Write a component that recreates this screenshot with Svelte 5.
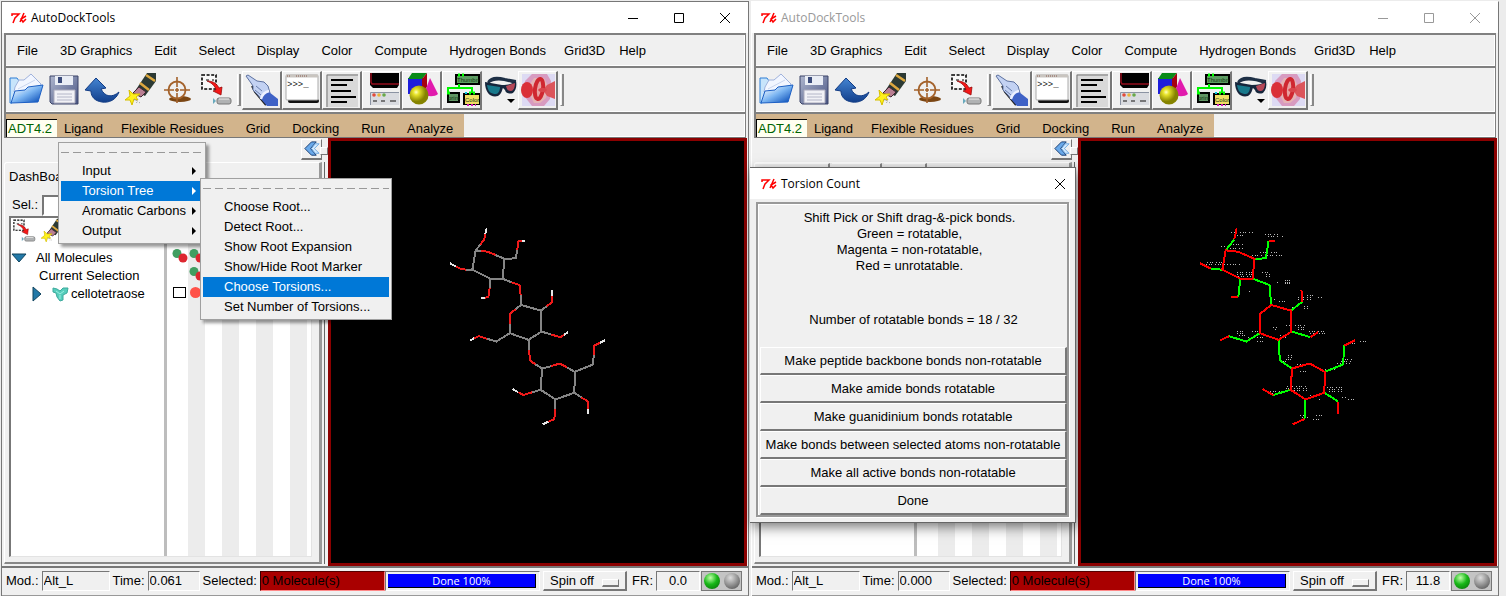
<script lang="ts">
	type Segment = [string, string];

	const menus = ['File', '3D Graphics', 'Edit', 'Select', 'Display', 'Color', 'Compute', 'Hydrogen Bonds', 'Grid3D', 'Help'];
	const adtMenus = ['Ligand', 'Flexible Residues', 'Grid', 'Docking', 'Run', 'Analyze'];
	const tools = ['open', 'save', 'undo', 'erase', 'target', 'select'];
	const panels = ['pointer', 'console', 'text', 'viewer', 'shapes', 'network', 'glasses', 'volume'];

	const ligandMenu = ['Input', 'Torsion Tree', 'Aromatic Carbons', 'Output'];
	const torsionMenu = [
		'Choose Root...',
		'Detect Root...',
		'Show Root Expansion',
		'Show/Hide Root Marker',
		'Choose Torsions...',
		'Set Number of Torsions...'
	];

	const torsionActions = [
		'Make peptide backbone bonds non-rotatable',
		'Make amide bonds rotatable',
		'Make guanidinium bonds rotatable',
		'Make bonds between selected atoms non-rotatable',
		'Make all active bonds non-rotatable',
		'Done'
	];

	const windows = [
		{ id: 'main', active: true, time: '0.061', rate: '0.0' },
		{ id: 'torsions', active: false, time: '0.000', rate: '11.8' }
	];

	// bonds coloured by atom type
	const byAtom: Segment[] = [
		['carbon', 'M155 121L138 119L128 177L182 204H219L225 144L198 133M138 119L152 102M225 144L259 143L263 117M128 177H110M182 204L180 232M219 204L246 215'],
		['carbon', 'M273 252L275 283L334 300L336 363L297 388L241 368V340M275 283L258 296M334 300L352 287M336 363L365 372M241 368L200 393L173 385M297 388L299 418'],
		['carbon', 'M317 461L338 474L333 538L378 567L435 547L436 484L413 471M338 474L365 467M436 484L491 462L493 434M435 547L456 561M378 567L376 597M333 538L307 546'],
		['oxygen', 'M155 121L175 123L198 133M152 102L164 86L167 70M263 117L267 90H277M110 177L93 174L78 167M180 232L176 260L165 261M246 215L270 223L273 252'],
		['oxygen', 'M258 296L241 310V340M352 287L368 274L369 256M365 372L393 380L404 373M173 385L148 377L134 383M299 418L301 450L317 461'],
		['oxygen', 'M365 467L391 459L413 471M493 434L495 405L511 397M456 561L477 574V595M376 597L375 626L357 634M307 546L281 554L266 545'],
		['hydrogen', 'M167 70L171 53M277 90H287M78 167L61 158M165 261H153M369 256L366 238M404 373L416 365M134 383L121 390M511 397L527 389M477 595V611M357 634L340 642M266 545L249 536']
	];

	// bonds coloured by torsion state
	const byTorsion: Segment[] = [
		['rotatable', 'M138 119L164 86M225 144L259 143L267 90M128 177L93 174M182 204L176 260M219 204L270 223L275 283M334 300L368 274M336 363L393 380M241 368L200 393L148 377'],
		['rotatable', 'M297 388L301 450L338 474M436 484L491 462L495 405M435 547L477 574M378 567L375 626M333 538L281 554'],
		['unrotatable', 'M138 119L175 123L225 144L219 204H182L128 177ZM275 283L334 300L336 363L297 388L241 368V310ZM338 474L391 459L436 484L435 547L378 567L333 538Z'],
		['unrotatable', 'M164 86L171 53M267 90H287M93 174L61 158M176 260H153M368 274L366 238M393 380L416 365M148 377L121 390M495 405L527 389M477 574V611M375 626L340 642M281 554L249 536']
	];

	// label dots: x start, x end, y
	const dots = [
		[153, 176, 64], [180, 220, 64], [171, 190, 73], [123, 135, 106], [159, 195, 100], [150, 192, 112],
		[255, 298, 70], [265, 300, 76], [307, 312, 76], [321, 324, 70], [240, 265, 124], [274, 302, 124],
		[218, 250, 135], [262, 306, 135], [81, 130, 154], [78, 145, 160], [150, 182, 160],
		[171, 216, 184], [171, 220, 190], [174, 220, 196], [246, 274, 184], [260, 270, 190], [260, 270, 196],
		[291, 300, 214], [315, 332, 208], [315, 332, 214], [315, 332, 220],
		[207, 210, 244], [282, 290, 268], [297, 318, 274], [384, 402, 256], [357, 396, 262], [357, 396, 268], [416, 428, 262],
		[339, 352, 292], [374, 390, 287], [374, 390, 293], [320, 384, 346], [357, 384, 352], [357, 384, 358], [279, 294, 352], [285, 294, 358],
		[171, 200, 364], [171, 200, 370], [177, 196, 376], [216, 236, 364], [204, 258, 380], [390, 444, 364], [392, 444, 370],
		[300, 324, 376], [300, 318, 382], [232, 254, 393], [326, 340, 436], [326, 340, 442], [318, 340, 448], [302, 324, 454],
		[354, 376, 462], [510, 532, 400], [543, 564, 394], [488, 522, 448], [484, 522, 454], [474, 512, 460], [362, 380, 484],
		[436, 474, 478], [324, 384, 528], [318, 386, 534], [318, 386, 540], [444, 488, 532], [450, 488, 538], [450, 488, 544],
		[270, 312, 544], [276, 312, 550], [392, 410, 556], [420, 426, 568], [488, 500, 562], [507, 528, 568],
		[362, 390, 616], [368, 390, 622], [411, 432, 616], [400, 424, 628]
	];
</script>

{#snippet icon(name: string)}
	<svg class="icon" viewBox="0 0 36 36" aria-hidden="true">
		{#if name === 'open'}
			<path d="M2 6h7l2 3v6L4 31H2z" fill="#c7e4fb" stroke="#2f7fd6" />
			<path d="M7 15L11 8h5l7-6 10 10-3 8H6z" fill="#f2f6ff" stroke="#9fb2dc" />
			<path d="M10 17l17-9" stroke="#c9d5ee" />
			<path d="M7 19l10-1 3-3 15-2-5 17-27 1z" fill="url(#folder)" stroke="#1c5fc4" />
		{:else if name === 'save'}
			<path d="M4 4h28v28H6l-2-2z" fill="url(#disk)" stroke="#3c4468" />
			<path d="M9 4h18v9H9z" fill="#e9edf5" />
			<path d="M12 5h4v6h-4z" fill="#3b4b7a" />
			<path d="M8 18h21v13H8z" fill="#f1f1f6" stroke="#aab" />
			<path d="M11 22h15M11 25h15M11 28h15" stroke="#b4b6c8" />
		{:else if name === 'undo'}
			<path d="M1 18L12 6l10 10-5 1c4 8 11 9 18 3-3 8-10 11-17 10C11 29 7 25 7 19z" fill="url(#arrow)" stroke="#123c85" />
		{:else if name === 'erase'}
			<path d="M25 1h9v8L23 24l-10-5z" fill="#2c3a34" />
			<path d="M24 3l9 6M18 11l9 7" stroke="#dda83f" stroke-width="2.5" />
			<path d="M17 15l7 5-5 5-8-4z" fill="#b97f92" stroke="#3f2530" />
			<path d="M7 18l4 4 7 0-4 3 2 3-4-1-2 6-2-5-5 0 5-4z" fill="#fff21c" stroke="#d6bf00" />
			<path d="M12 27l3 4M14 28l4 3" stroke="#999" stroke-dasharray="2 2" />
		{:else if name === 'target'}
			<ellipse cx="20" cy="27" rx="11" ry="3" fill="#7b4613" />
			<circle cx="17" cy="18" r="8.5" fill="#efefef" stroke="#a4622b" stroke-width="1.8" />
			<path d="M17 5v10M17 21v10M4 18h10M20 18h10M15 18h4M17 16v4" stroke="#a4622b" stroke-width="1.6" />
		{:else if name === 'select'}
			<path d="M4 3h14v14H4z" fill="#f8f8f8" stroke="#000" stroke-width="1.6" stroke-dasharray="3 1.6" />
			<path d="M8 8h3M14 8h2" stroke="#000" />
			<path d="M9 9c7 0 10 3 12 7l3-1-1 8-8-4 3-1c-1-4-4-7-9-9z" fill="#f41818" stroke="#8d0000" stroke-width=".7" />
			<rect x="19" y="26" width="14" height="6" rx="2" fill="#b0b2b3" stroke="#777" />
			<path d="M15 26l3 3-3 3z" fill="#68aabd" />
			<path d="M21 27h10" stroke="#eee" />
		{:else if name === 'pointer'}
			<path d="M8 14l3 6 6 7 5 6" stroke="#222" stroke-width="2" />
			<path d="M2 4l2-1 9 6 7 1 4 4 2 7-8 7-5-6-4-4 0-4-2-3z" fill="#c3d2f3" stroke="#5d719f" />
			<path d="M12 14l6 5M11 18l6 5" stroke="#6a7fae" />
			<path d="M17 27c1-4 4-7 8-7l9 7v7H23z" fill="#3f62c6" />
			<path d="M17 27c1-4 4-7 8-8" stroke="#edf1ff" stroke-width="2.5" />
		{:else if name === 'console'}
			<rect x="4" y="27" width="31" height="4" rx="2" fill="#111" />
			<rect x="2" y="3" width="32" height="25" rx="1" fill="#fff" stroke="#aaa" />
			<path d="M2 4h32" stroke="#c9c5c0" stroke-width="3" />
			<path d="M3 4h3M12 4h12" stroke="#885a4f" stroke-dasharray="1 1" />
			<text x="3" y="15" class="prompt">&gt;&gt;&gt;_</text>
		{:else if name === 'text'}
			<path d="M2 2h32v33H2z" fill="#d9d9d9" />
			<path d="M3 35V3h31" stroke="#777" />
			<path d="M7 8h22M7 13h16M7 19h20M7 25h25M7 30h16" stroke="#000" stroke-width="2" />
		{:else if name === 'viewer'}
			<path d="M6 1h29v12l-2 3H9l-3-3z" fill="#000" />
			<path d="M7 1v9l1 2h27" stroke="#930d1c" stroke-width="1.5" />
			<rect x="6" y="21" width="29" height="12" fill="#d9dbe0" />
			<path d="M6.500 33V20.500H35" stroke="#8b93a3" />
			<circle cx="10" cy="23" r="1.8" fill="#e34a3a" />
			<circle cx="15" cy="23" r="1.8" fill="#e8b43b" />
			<circle cx="20" cy="23" r="1.8" fill="#68a94a" />
			<path d="M9 29h4M17 29h4M26 29h6" stroke="#555" stroke-width="1.5" />
		{:else if name === 'shapes'}
			<path d="M4 6h15v16H4z" fill="#1d1ddc" />
			<path d="M4 7l4-6h15l-5 6z" fill="#098b18" />
			<path d="M18 7l5-6v14l-5 5z" fill="#a60012" />
			<path d="M26 6l8 16c-3 3-11 3-14 0z" fill="#e11aad" />
			<circle cx="15" cy="23" r="9.500" fill="url(#ball)" />
		{:else if name === 'network'}
			<path d="M12 3h23v9H12z" fill="#5d9b62" stroke="#000" stroke-width="2" />
			<path d="M15 12v4M4 22v-6h24v5" stroke="#00f700" stroke-width="2" />
			<path d="M4 21h11v9H4zM20 22h15v10H20z" fill="#609563" stroke="#000" stroke-width="2" />
			<path d="M21 23h14v9H21z" fill="#f1df64" />
			<path d="M14 3h2M18 3h2M3 21h3M25 21h2M29 21h2" stroke="#0f0" stroke-width="3" />
			<path d="M21 21h2" stroke="#0bc8df" stroke-width="2" />
			<path d="M23 33h9" stroke="#d318b8" stroke-width="2" stroke-dasharray="2 2" />
			<text x="13" y="10" class="node">Thumbn</text>
			<text x="4" y="28" class="node">print</text>
			<text x="21" y="30" class="node">Color</text>
		{:else if name === 'glasses'}
			<path d="M5 10c3-5 10-5 17-3l11 2M5 11c6-5 16-4 27 0" stroke="#1d2f45" stroke-width="2" />
			<path d="M2 10c6 1 11 2 17 3 6 0 10-1 14-4 1 5 0 9-3 12-3 1-7 1-8-3l-2-2c-1 1-1 6-5 8-4 1-8 0-10-3-2-3-3-6-3-11z" fill="#16263c" />
			<path d="M4 13l13 2c0 4-2 7-4 7-5 0-8-2-9-9z" fill="#17788b" />
			<path d="M23 14l9-3c0 5-2 8-4 8-3 0-4-1-5-5z" fill="#b54758" />
			<path d="M24 27h8l-4 4z" fill="#000" />
		{:else}
			<path d="M2 2h33v32H2z" fill="#dddaf3" />
			<path d="M12 2h15l4 7-1 18-6 7H12L5 25V9z" fill="#d89bc0" />
			<path d="M14 6h10l4 8-2 12-6 5h-6l-4-8V12z" fill="#e5b3b4" />
			<ellipse cx="7" cy="18" rx="6" ry="8" fill="#da3038" />
			<path d="M23 18l4-5 8-4v18l-8-3z" fill="#db545a" />
			<ellipse cx="19" cy="17" rx="4" ry="10" fill="#e9a0a0" stroke="#cf2730" stroke-width="4" transform="rotate(8 19 17)" />
			<path d="M18 18c2-3 7-3 9 0-2 3-7 3-9 0z" fill="#d9454c" />
		{/if}
	</svg>
{/snippet}

{#snippet logo()}
	<svg class="logo" viewBox="0 0 16 12" aria-hidden="true">
		<path d="M1 4V2h7L4 6l-2 5M13 1L9 10M15 4l-5 3 2 3 3-3" />
	</svg>
{/snippet}

{#snippet atoms()}
	<svg class="atoms" viewBox="0 0 17 14" aria-hidden="true">
		<circle cx="5" cy="4.500" r="4.500" fill="#419e61" />
		<circle cx="11" cy="9" r="4.500" fill="#dd2730" />
	</svg>
{/snippet}

<svg class="defs" aria-hidden="true">
	<defs>
		<linearGradient id="folder" x1="0" y1="0" x2="1" y2="1">
			<stop offset=".1" stop-color="#fff" /><stop offset=".5" stop-color="#7bb5f2" /><stop offset=".9" stop-color="#1457bd" />
		</linearGradient>
		<linearGradient id="disk" x1="0" y1="0" x2="1" y2="1">
			<stop offset="0" stop-color="#aeb6ce" /><stop offset="1" stop-color="#495583" />
		</linearGradient>
		<linearGradient id="arrow" x1="0" y1="0" x2="0" y2="1">
			<stop offset="0" stop-color="#4585d2" /><stop offset="1" stop-color="#123f8c" />
		</linearGradient>
		<radialGradient id="ball" cx=".35" cy=".35">
			<stop offset="0" stop-color="#ffffc0" /><stop offset=".3" stop-color="#e7e32b" /><stop offset="1" stop-color="#858300" />
		</radialGradient>
	</defs>
</svg>

<div class="desktop">
	{#each windows as win (win.id)}
		<section class="window" class:inactive={!win.active}>
			<header class="titlebar">
				{@render logo()}
				<h1>AutoDockTools</h1>
				<div class="controls">
					<button aria-label="Minimize"><svg viewBox="0 0 12 12"><path d="M1 6.500h10" /></svg></button>
					<button aria-label="Maximize"><svg viewBox="0 0 12 12"><path d="M1.500 1.500h9v9h-9z" /></svg></button>
					<button aria-label="Close"><svg viewBox="0 0 12 12"><path d="M1 1l10 10M11 1L1 11" /></svg></button>
				</div>
			</header>

			<nav class="menubar">
				{#each menus as menu}
					<button class:tight={menu === 'Grid3D' || menu === 'Help'}>{menu}</button>
				{/each}
			</nav>

			<div class="toolbar">
				{#each tools as tool}
					<button class="tool" aria-label={tool}>{@render icon(tool)}</button>
				{/each}
				<span class="separator"></span>
				{#each panels as panel}
					<button class="panel" class:flat={panel === 'glasses'} aria-label={panel}>{@render icon(panel)}</button>
				{/each}
				<span class="separator"></span>
			</div>

			<div class="adt">
				<div class="adt-menus">
					<button class="version">ADT4.2</button>
					{#each adtMenus as menu}
						<button class:tight={menu === 'Ligand'}>{menu}</button>
					{/each}
				</div>
				{#if win.active}
					<ul class="menu ligand-menu">
						{#each ligandMenu as item}
							<li class:chosen={item === 'Torsion Tree'}>
								<button>{item}<span class="more"></span></button>
								{#if item === 'Torsion Tree'}
									<ul class="menu submenu">
										{#each torsionMenu as entry}
											<li class:chosen={entry === 'Choose Torsions...'}><button>{entry}</button></li>
										{/each}
									</ul>
								{/if}
							</li>
						{/each}
					</ul>
				{/if}
			</div>

			<main>
				<aside>
					<button class="collapse" aria-label="Collapse panel">
						<svg viewBox="0 0 20 18"><path d="M10 2h5l-6 7 6 7h-5L3 9z" fill="#69a9ea" stroke="#173b70" /><path d="M14 4h4l-5 5 5 5h-4l-4-5z" fill="#d6edff" stroke="#6ba6e0" /></svg>
					</button>
					<span class="sash"></span>
					<div class="dashboard">
						{#if win.active}
							<h2>DashBoard</h2>
							<div class="selection">
								<label for="sel">Sel.:</label>
								<input id="sel" />
							</div>
						{:else}
							<div class="tab-tops"><span></span><span></span><span></span></div>
						{/if}
						<div class="tree">
							<div class="names">
								{#if win.active}
									<div class="tree-tools">{@render icon('select')}{@render icon('erase')}</div>
									<ul>
										<li>
											<svg class="twist" viewBox="0 0 16 10"><path d="M1 1h14L8 9z" /></svg>
											All Molecules
										</li>
										<li class="current">Current Selection</li>
										<li class="child">
											<svg class="twist side" viewBox="0 0 10 16"><path d="M1 1v14l8-7z" /></svg>
											<svg class="blob" viewBox="0 0 17 15"><path d="M1 1l4 1 3 2 3-3 5 0-1 5-4 2v5l-3 1-3-4-1-4-3-1z" fill="#56cdbb" stroke="#3daa9d" /><path d="M4 4l4 3 4-3M8 8v4" stroke="#9cf0e2" /></svg>
											cellotetraose
										</li>
									</ul>
								{/if}
							</div>
							<div class="columns">
								{#if win.active}
									<div class="marks">{@render atoms()}{@render atoms()}</div>
									<div class="marks second">{@render atoms()}</div>
									<div class="marks">
										<input type="checkbox" aria-label="Show lines for cellotetraose" />
										<span class="dot"></span>
									</div>
								{/if}
							</div>
						</div>
					</div>
				</aside>

				<div class="view">
					<svg viewBox="0 0 414 423" shape-rendering="crispEdges" aria-label="cellotetraose">
						<g transform="translate(99 70) scale(.33333)">
							{#if !win.active}
								{#each dots as [from, to, y]}
									<path class="dots" d="M{from} {y}H{to}" />
								{/each}
							{/if}
							{#each win.active ? byAtom : byTorsion as [kind, d]}
								<path class="bond {kind}" {d} />
							{/each}
						</g>
					</svg>
				</div>
			</main>

			<footer>
				<label for="mod-{win.id}">Mod.:</label>
				<input class="mod" id="mod-{win.id}" value="Alt_L" readonly />
				<label for="time-{win.id}">Time:</label>
				<input class="time" id="time-{win.id}" value={win.time} readonly />
				<label for="selected-{win.id}">Selected:</label>
				<input class="selected" id="selected-{win.id}" value="0 Molecule(s)" readonly />
				<div class="progress" role="progressbar" aria-valuenow="100"><span>Done 100%</span></div>
				<div class="spin">
					<select aria-label="Spin"><option>Spin off</option></select>
				</div>
				<label for="rate-{win.id}">FR:</label>
				<input class="rate" id="rate-{win.id}" value={win.rate} readonly />
				<div class="leds"><span class="led on"></span><span class="led"></span></div>
			</footer>

			{#if !win.active}
				<div class="dialog" role="dialog" aria-labelledby="torsion-title">
					<header class="titlebar">
						{@render logo()}
						<h2 id="torsion-title">Torsion Count</h2>
						<div class="controls">
							<button aria-label="Close dialog"><svg viewBox="0 0 12 12"><path d="M1 1l10 10M11 1L1 11" /></svg></button>
						</div>
					</header>
					<div class="dialog-frame">
						<p class="hint">
							Shift Pick or Shift drag-&amp;-pick bonds.<br />
							Green = rotatable,<br />
							Magenta = non-rotatable,<br />
							Red = unrotatable.
						</p>
						<p class="count">Number of rotatable bonds = 18 / 32</p>
						{#each torsionActions as action}
							<button>{action}</button>
						{/each}
					</div>
				</div>
			{/if}
		</section>
	{/each}
</div>

<style>
	:global(body) {
		background: #ececec;
	}

	* {
		box-sizing: border-box;
	}

	button,
	input,
	select {
		font: inherit;
		color: inherit;
		margin: 0;
		padding: 0;
		border: 0;
		border-radius: 0;
		background: none;
	}

	h1,
	h2,
	p,
	ul {
		margin: 0;
		padding: 0;
		list-style: none;
	}

	svg {
		display: block;
		fill: none;
	}

	.defs {
		position: absolute;
		width: 0;
		height: 0;
	}

	.desktop {
		display: flex;
		min-height: 100vh;
		padding-right: 6px;
		font: 13px/16px 'Liberation Sans', Arial, sans-serif;
		color: #000;
	}

	.window {
		position: relative;
		display: flex;
		flex: 1;
		flex-direction: column;
		min-width: 0;
		margin: 1px 1px 0;
		border: 1px solid #777;
		border-bottom: 0;
		background: #f0f0f0;
	}

	.window.inactive {
		border-color: #fff #777 #fff #fff;
	}

	.titlebar {
		display: flex;
		align-items: center;
		height: 31px;
		padding-left: 9px;
		background: #fff;
	}

	.titlebar h1,
	.titlebar h2 {
		font: 12px/16px 'Open Sans', 'Noto Sans', sans-serif;
	}

	.inactive h1 {
		color: #999;
	}

	.logo {
		width: 16px;
		height: 12px;
		margin-right: 4px;
		stroke: #f00;
		stroke-width: 1.5;
	}

	.controls {
		display: flex;
		margin-left: auto;
	}

	.controls button {
		display: grid;
		place-items: center;
		width: 46px;
		height: 30px;
	}

	.controls svg {
		width: 12px;
		height: 12px;
		stroke: #000;
	}

	.inactive > .titlebar .controls svg {
		stroke: #999;
	}

	.menubar,
	.toolbar,
	.adt {
		display: flex;
		margin: 0 2px;
		border: solid #808080;
		border-width: 2px 1px 0 2px;
		box-shadow: inset 0 -1px #fff, inset -1px 0 #fff;
	}

	.menubar {
		height: 33px;
	}

	.menubar button,
	.adt-menus button {
		padding: 0 11px;
		white-space: nowrap;
	}

	.menubar .tight,
	.adt-menus .tight {
		padding-right: 7px;
		padding-left: 7px;
	}

	.toolbar {
		align-items: center;
		height: 46px;
		padding-left: 1px;
	}

	.icon {
		width: 36px;
		height: 36px;
	}

	.prompt {
		font: 9px 'Liberation Mono', monospace;
		fill: #222;
	}

	.node {
		font: 6px 'Liberation Sans', sans-serif;
		fill: #10320f;
	}

	.tool {
		display: grid;
		place-items: center;
		width: 38px;
		height: 39px;
	}

	.separator {
		width: 4px;
		height: 32px;
		margin: 0 1px 0 2px;
		border-right: 2px solid #888;
		border-bottom: 1px solid #888;
		border-left: 1px solid #fff;
	}

	.panel {
		display: grid;
		place-items: center;
		width: 40px;
		height: 39px;
		border: solid;
		border-width: 1px 2px 2px 1px;
		border-color: #fff #777 #777 #fff;
	}

	.panel.flat {
		width: 36px;
		border-color: transparent;
	}

	.adt {
		position: relative;
		height: 26px;
		border-bottom: 1px solid #777;
	}

	.adt-menus {
		display: flex;
		align-items: flex-end;
		background: #d2b48c;
	}

	.adt-menus button {
		height: 18px;
		padding-top: 2px;
	}

	.adt-menus .version {
		width: 51px;
		padding: 0 1px;
		border: solid #000;
		border-width: 1px 0 0 1px;
		background: #fffff0;
		color: #006400;
		text-align: left;
	}

	.menu {
		position: absolute;
		z-index: 2;
		padding: 18px 2px 2px;
		border: 1px solid #a0a0a0;
		background:
			repeating-linear-gradient(90deg, #999 0 8px, transparent 8px 12px) 2px 9px / calc(100% - 4px) 1px no-repeat,
			#f0f0f0;
		box-shadow: 3px 3px 3px #0006;
		color: #000;
	}

	.menu button {
		display: flex;
		align-items: center;
		justify-content: space-between;
		width: 100%;
		height: 20px;
		padding: 0 7px 0 21px;
		white-space: nowrap;
	}

	.menu li {
		position: relative;
	}

	.menu .chosen > button {
		background: #0078d7;
		color: #fff;
	}

	.more {
		border: 4px solid transparent;
		border-right: 0;
		border-left-color: currentColor;
	}

	.ligand-menu {
		top: 28px;
		left: 52px;
		width: 148px;
	}

	.submenu {
		top: -3px;
		left: 139px;
		width: 192px;
	}

	main {
		display: flex;
		flex: 1;
	}

	aside {
		position: relative;
		display: flex;
		flex-direction: column;
		width: 326px;
		padding: 0 4px 2px 2px;
	}

	.collapse {
		align-self: flex-end;
		width: 21px;
		height: 21px;
		margin: 1px 2px 2px 0;
		border: solid;
		border-width: 1px 1px 2px 1px;
		border-color: #fff #777 #777 #fff;
	}

	.sash {
		position: absolute;
		top: 9px;
		right: 0;
		width: 8px;
		height: 8px;
		border: 1px solid;
		border-color: #fff #777 #777 #fff;
		background: #f0f0f0;
	}

	.dashboard {
		display: flex;
		flex: 1;
		flex-direction: column;
		margin-right: 2px;
		padding: 0 4px 5px;
		border: solid;
		border-width: 1px 3px 2px 1px;
		border-color: #fff #999 #888 #fff;
		border-top-left-radius: 3px;
		box-shadow: 2px 0 #f0f0f0, 3px 0 #666;
	}

	.dashboard h2 {
		height: 31px;
		font: inherit;
		line-height: 28px;
	}

	.tab-tops {
		display: grid;
		grid-template-columns: 75px 50px 43px;
		gap: 2px;
		height: 53px;
		margin-left: -4px;
	}

	.tab-tops span {
		border-top: 1px solid #fff;
		border-right: 2px solid #888;
	}

	.selection {
		display: flex;
		align-items: center;
		height: 22px;
		padding-left: 3px;
	}

	.selection label {
		width: 30px;
	}

	.selection input {
		width: 160px;
		height: 21px;
		border: 2px solid;
		border-color: #777 #fff #fff #777;
		background: #fff;
	}

	.tree {
		display: flex;
		flex: 1;
		margin-right: 3px;
		border: solid;
		border-width: 2px 1px 1px 2px;
		border-color: #777 #e3e3e3 #e3e3e3 #777;
		background: #fff;
	}

	.names {
		width: 156px;
		border-right: 3px solid #bdbdbd;
	}

	.tree-tools {
		display: flex;
		gap: 2px;
		height: 31px;
	}

	.tree-tools .icon {
		width: 26px;
		height: 26px;
	}

	.names li {
		display: flex;
		align-items: center;
		height: 18px;
		white-space: nowrap;
	}

	.names .current {
		padding-left: 28px;
	}

	.names .child {
		padding-left: 20px;
	}

	.twist {
		width: 16px;
		height: 10px;
		margin-right: 9px;
		fill: #2379a8;
		stroke: #11445f;
	}

	.twist.side {
		width: 12px;
		height: 16px;
		margin-right: 9px;
	}

	.blob {
		width: 17px;
		height: 15px;
		margin-right: 2px;
	}

	.columns {
		flex: 1;
		padding: 29px 0 0 5px;
		background: repeating-linear-gradient(90deg, #fff 0 17px, #ececec 17px 34px) 4px 0;
	}

	.marks {
		display: flex;
		align-items: center;
		height: 18px;
	}

	.marks.second {
		padding-left: 17px;
	}

	.atoms {
		width: 17px;
		height: 14px;
	}

	.marks input {
		width: 13px;
		height: 11px;
		margin: 0 4px 0 1px;
		appearance: none;
		border: 1px solid #000;
		background: #fff;
	}

	.dot {
		width: 11px;
		height: 11px;
		border-radius: 50%;
		background: #ff5148;
	}

	.view {
		flex: 1;
		min-width: 0;
		margin-right: 1px;
		border: 3px solid #8b0000;
		background: #000;
	}

	.view svg {
		width: 100%;
		height: 100%;
	}

	.bond {
		fill: none;
		stroke-width: 6;
	}

	.carbon {
		stroke: #858585;
	}

	.oxygen {
		stroke: #ee1a1a;
	}

	.hydrogen {
		stroke: #e6e6e6;
	}

	.rotatable {
		stroke: #0f0;
	}

	.unrotatable {
		stroke: #f00;
	}

	.dots {
		stroke: #bbb;
		stroke-width: 3;
		stroke-dasharray: 3 6 3 3 3 9;
	}

	footer {
		display: flex;
		align-items: center;
		height: 30px;
		padding: 0 6px 2px 4px;
		border-top: 2px solid #777;
		border-bottom: 1px solid #999;
		white-space: nowrap;
	}

	footer input {
		height: 20px;
		margin-right: 3px;
		padding: 0 1px;
		border: 1px solid;
		border-color: #777 #fff #fff #777;
	}

	footer label {
		margin-right: 3px;
	}

	.mod {
		width: 68px;
	}

	.time {
		width: 52px;
	}

	footer .selected {
		width: 125px;
		margin-right: 0;
		border-color: #500 #f88 #f88 #300;
		background: #a90000;
	}

	.progress {
		flex: 1;
		height: 20px;
		margin-right: 3px;
		padding: 2px 3px 3px 2px;
		border: 1px solid;
		border-color: #777 #fff #fff #777;
	}

	.progress span {
		display: block;
		height: 14px;
		border: solid #000;
		border-width: 0 1px 1px 0;
		background: #00f;
		color: #fff;
		font: 11px/14px 'Open Sans', sans-serif;
		text-align: center;
	}

	.spin {
		position: relative;
		width: 84px;
		height: 20px;
		margin-right: 5px;
		border: solid;
		border-width: 1px 2px 2px 1px;
		border-color: #fff #777 #777 #fff;
	}

	.spin select {
		width: 100%;
		height: 100%;
		padding: 1px 0 0 6px;
		appearance: none;
	}

	.spin::after {
		content: '';
		position: absolute;
		top: 7px;
		right: 6px;
		width: 15px;
		height: 5px;
		border: solid;
		border-width: 1px 1px 2px 1px;
		border-color: #fff #777 #777 #fff;
		pointer-events: none;
	}

	footer .rate {
		width: 44px;
		margin-right: 0;
		text-align: center;
	}

	.leds {
		display: flex;
		gap: 4px;
		margin-left: 1px;
		padding: 1px 1px 1px 2px;
		border: 1px solid #777;
		background: #c4c4c4;
	}

	.led {
		width: 16px;
		height: 16px;
		border-radius: 50%;
		background: radial-gradient(circle at 40% 30%, #ddd, #888 55%, #444);
	}

	.led.on {
		background: radial-gradient(circle at 40% 30%, #bfffa8, #18b818 45%, #056405);
	}

	.dialog {
		position: absolute;
		top: 165px;
		left: -2px;
		z-index: 2;
		width: 326px;
		padding-bottom: 5px;
		border: solid #666;
		border-width: 1px 1px 1px 0;
		background: #f0f0f0;
		box-shadow: 2px 4px 12px #0008;
	}

	.dialog .titlebar {
		padding-left: 11px;
	}

	.dialog .controls button {
		width: 30px;
	}

	.dialog-frame {
		margin: 3px 6px 0;
		padding: 2px 0 0 2px;
		border: 2px solid #999;
		box-shadow: inset 1px 1px #fff, 1px 1px #fff;
		text-align: center;
	}

	.hint {
		padding: 4px 8px 0 0;
	}

	.count {
		padding: 38px 0 19px;
	}

	.dialog-frame button {
		display: block;
		width: 100%;
		height: 28px;
		border: solid;
		border-width: 1px 2px 2px 1px;
		border-color: #fff #777 #777 #fff;
		white-space: nowrap;
	}
</style>
